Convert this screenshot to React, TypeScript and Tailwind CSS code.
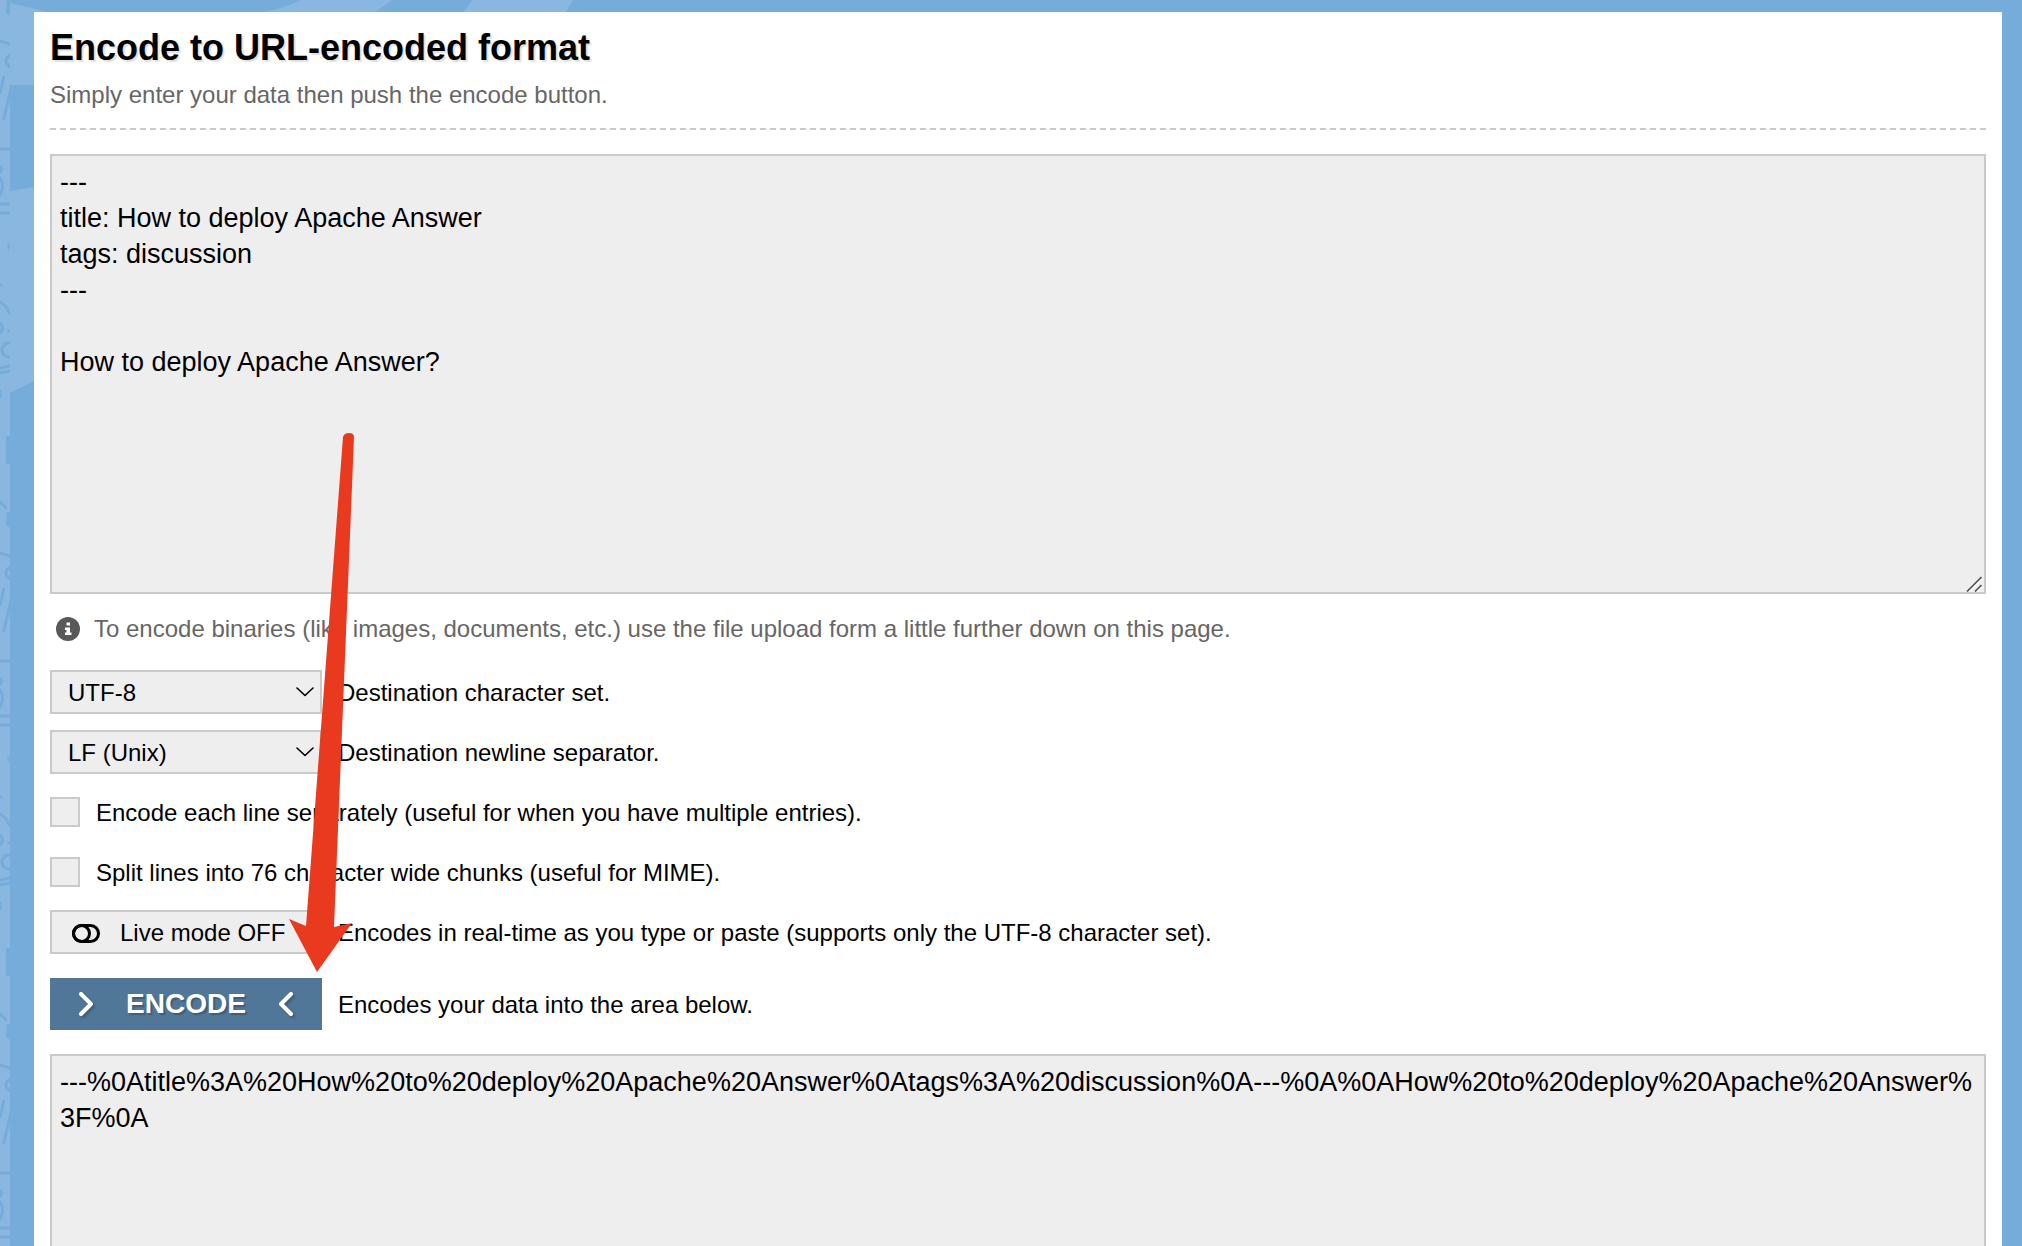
import { ReactNode } from "react";

const input = `---
title: How to deploy Apache Answer
tags: discussion
---

How to deploy Apache Answer?
`;

const output =
  "---%0Atitle%3A%20How%20to%20deploy%20Apache%20Answer%0Atags%3A%20discussion%0A---%0A%0AHow%20to%20deploy%20Apache%20Answer%3F%0A";

function Backdrop() {
  return (
    <svg className="absolute inset-0 h-full w-full" aria-hidden="true">
      <defs>
        <pattern id="doodles" width="10" height="512" patternUnits="userSpaceOnUse">
          <rect width="10" height="512" fill="#89b7df" />
          <g stroke="#75acd9" strokeWidth="3" fill="none" strokeLinecap="round">
            <path d="M7 0 6 13 10 16V0z" fill="#75acd9" stroke="none" />
            <path d="M0 41 10 44" />
            <circle cx="12" cy="61" r="6" />
            <path d="M10 57a4 4 0 0 0 0 8M4 77 0 93M11 88 4 119" />
            <path d="M0 149h10M0 204h10M0 213h10" />
            <path d="M0 167q3 2 0 5M0 178q5 8 0 17" />
            <path d="M10 243 7 245 9 252z" fill="#75acd9" stroke="none" />
            <path d="M0 284l1 1M0 302q7 4 10 12M0 323q5 5 0 10M9 331v0" />
            <circle cx="9" cy="350" r="7" />
            <path d="M0 368 10 366M0 373 10 371M0 391v6" />
            <path d="M10 436H6v28h4z" fill="#75acd9" stroke="none" />
            <path d="M0 502 6 508" />
          </g>
        </pattern>
      </defs>
      <rect width="10" height="100%" fill="url(#doodles)" />
      <g fill="#89b7df">
        <path d="M10 3 48 12 34 85H10zM10 191 34 187V381L10 393z" />
        <path d="M265 12Q284 8 301 0H392L375 12zM463 12 473 0H573L566 12z" />
      </g>
    </svg>
  );
}

function Chevron() {
  return (
    <svg className="pointer-events-none absolute top-4 right-2 h-3 w-[18px]" viewBox="0 0 18 12" fill="none" stroke="#000" strokeWidth="1.6" strokeLinecap="round" strokeLinejoin="round" aria-hidden="true">
      <path d="M1 2 9 9.5 17 2" />
    </svg>
  );
}

function Angle({ d }: { d: string }) {
  return (
    <svg className="h-[26px] w-4 drop-shadow-[2px_2px_1px_rgba(0,0,0,0.2)]" viewBox="0 0 16 26" fill="none" stroke="#fff" strokeWidth="4" strokeLinecap="round" strokeLinejoin="round" aria-hidden="true">
      <path d={d} />
    </svg>
  );
}

function SelectRow({ id, options, children }: { id: string; options: string[]; children: ReactNode }) {
  return (
    <div className="flex h-[60px] items-center gap-4">
      <div className="relative w-[272px] shrink-0">
        <select id={id} className="h-11 w-full appearance-none border-2 border-[#cacaca] bg-[#eee] px-4 pt-0.5 text-2xl leading-8">
          {options.map((o) => (
            <option key={o}>{o}</option>
          ))}
        </select>
        <Chevron />
      </div>
      <label htmlFor={id} className="pt-0.5">{children}</label>
    </div>
  );
}

function CheckRow({ children }: { children: ReactNode }) {
  return (
    <label className="flex h-[60px] items-center gap-4">
      <input type="checkbox" className="size-[30px] shrink-0 appearance-none border-2 border-[#cacaca] bg-[#eee] checked:bg-[#507698]" />
      <span className="pt-0.5">{children}</span>
    </label>
  );
}

function Arrow() {
  return (
    <svg className="pointer-events-none absolute top-[420px] left-[254px] h-[541px] w-[66px]" viewBox="0 0 66 541" aria-hidden="true">
      <path d="M55 5Q56 1 61 1Q66 1 66 5L46 495 64 491 29 540 1 487 18 494Z" fill="#e9391f" />
    </svg>
  );
}

export default function App() {
  return (
    <div className="relative h-screen overflow-hidden bg-[#75acd9] pt-3 pr-5 pl-[34px] font-['Liberation_Sans',Arial,sans-serif] text-2xl leading-8 text-black">
      <Backdrop />
      <main className="relative min-h-full bg-white px-4 pt-4">
        <h1 className="text-4xl leading-10 font-bold [text-shadow:2px_2px_1px_rgba(0,0,0,0.12)]">Encode to URL-encoded format</h1>
        <p className="mt-[11px] text-[#666]">Simply enter your data then push the encode button.</p>
        <svg className="mt-[17px] block h-0.5 w-full" aria-hidden="true">
          <line x1="0" y1="1" x2="100%" y2="1" stroke="#cacaca" strokeWidth="2" strokeDasharray="6 4" />
        </svg>
        <div className="relative mt-6">
          <textarea aria-label="Data to encode" defaultValue={input} className="block h-[440px] w-full resize-none border-2 border-[#cacaca] bg-[#eee] p-2 text-[27px] leading-9" />
          <svg className="pointer-events-none absolute right-1 bottom-0.5 size-4" viewBox="0 0 16 16" aria-hidden="true">
            <path d="M3 15.5 15.5 3M11 15.5 15.5 11" stroke="#fff" strokeWidth="2" />
            <path d="M1 15.5 15.5 1M9 15.5 15.5 9" stroke="#555" strokeWidth="1.7" />
          </svg>
        </div>
        <p className="mt-[19px] mb-[17px] flex items-center gap-3.5 pl-1.5 text-[#666]">
          <svg className="size-6 shrink-0" viewBox="0 0 24 24" aria-hidden="true">
            <circle cx="12" cy="12" r="12" fill="#595959" />
            <path d="M10.500 5.500h3.500v3h-3.500zM9 10.500h5v5h1.500V18H9v-2.500h1.500V13H9z" fill="#fff" />
          </svg>
          To encode binaries (like images, documents, etc.) use the file upload form a little further down on this page.
        </p>
        <SelectRow id="charset" options={["UTF-8", "ASCII", "ISO-8859-1"]}>Destination character set.</SelectRow>
        <SelectRow id="newline" options={["LF (Unix)", "CRLF (Windows)"]}>Destination newline separator.</SelectRow>
        <CheckRow>Encode each line separately (useful for when you have multiple entries).</CheckRow>
        <CheckRow>Split lines into 76 character wide chunks (useful for MIME).</CheckRow>
        <div className="flex h-[60px] items-center gap-4">
          <button id="live" className="flex h-11 w-[272px] shrink-0 items-center gap-5 border-2 border-[#cacaca] bg-[#eee] pt-0.5 pl-5">
            <svg className="h-[19px] w-7" viewBox="0 0 28 19" fill="none" stroke="#000" strokeWidth="3" aria-hidden="true">
              <rect x="1.5" y="1.5" width="25" height="16" rx="8" />
              <circle cx="9.5" cy="9.5" r="8" />
            </svg>
            Live mode OFF
          </button>
          <label htmlFor="live" className="pt-0.5">Encodes in real-time as you type or paste (supports only the UTF-8 character set).</label>
        </div>
        <div className="mt-4 flex items-center gap-4">
          <button id="encode" className="flex h-[52px] w-[272px] shrink-0 items-center justify-between bg-[#507698] px-7 text-[28px] font-bold text-white [text-shadow:2px_2px_1px_rgba(0,0,0,0.2)]">
            <Angle d="M3 3 13 13 3 23" />
            ENCODE
            <Angle d="M13 3 3 13 13 23" />
          </button>
          <label htmlFor="encode" className="pt-0.5">Encodes your data into the area below.</label>
        </div>
        <textarea aria-label="Encoded data" readOnly defaultValue={output} className="mt-6 block h-[440px] w-full resize-none border-2 border-[#cacaca] bg-[#eee] p-2 text-[27px] leading-9 break-all" />
        <Arrow />
      </main>
    </div>
  );
}
